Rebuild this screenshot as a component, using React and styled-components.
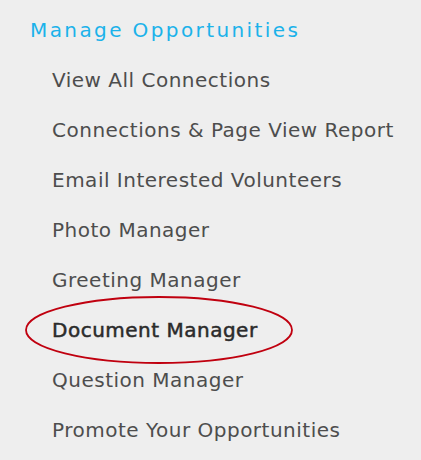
import React from "react";
import styled, { createGlobalStyle } from "styled-components";

const GlobalStyle = createGlobalStyle`
  html, body {
    margin: 0;
    padding: 0;
    background: #eeeeee;
  }
  body {
    font-family: "DejaVu Sans", "Open Sans", sans-serif;
  }
`;

const Menu = styled.nav`
  width: 421px;
  height: 460px;
  box-sizing: border-box;
  padding: 16px 0 0 30px;
  background: #eeeeee;
`;

const Title = styled.h3`
  margin: 0 0 11px;
  font-size: 20px;
  font-weight: 400;
  letter-spacing: 2.4px;
  line-height: 28px;
  color: #1bb2ea;
`;

const List = styled.ul`
  list-style: none;
  margin: 0;
  padding: 0 0 0 22px;
  display: flex;
  flex-direction: column;
`;

const Item = styled.li`
  position: relative;
  height: 50px;
  display: flex;
  align-items: center;
  font-size: 20px;
  letter-spacing: 0.5px;
  color: ${(p) => (p.$active ? "#2b2b2b" : "#4d4d4d")};
  -webkit-text-stroke: ${(p) => (p.$active ? "0.5px #2b2b2b" : "0")};
  white-space: nowrap;
`;

const Circle = styled.svg`
  position: absolute;
  left: -28px;
  top: -9px;
  overflow: visible;
  pointer-events: none;
`;

const items = [
  "View All Connections",
  "Connections & Page View Report",
  "Email Interested Volunteers",
  "Photo Manager",
  "Greeting Manager",
  "Document Manager",
  "Question Manager",
  "Promote Your Opportunities",
];

export default function App() {
  return (
    <>
      <GlobalStyle />
      <Menu>
        <Title>Manage Opportunities</Title>
        <List>
          {items.map((label) => {
            const active = label === "Document Manager";
            return (
              <Item key={label} $active={active}>
                {label}
                {active && (
                  <Circle width="270" height="68" viewBox="0 0 270 68">
                    <ellipse
                      cx="135"
                      cy="34"
                      rx="133"
                      ry="33"
                      fill="none"
                      stroke="#c0000f"
                      strokeWidth="1.8"
                    />
                  </Circle>
                )}
              </Item>
            );
          })}
        </List>
      </Menu>
    </>
  );
}
